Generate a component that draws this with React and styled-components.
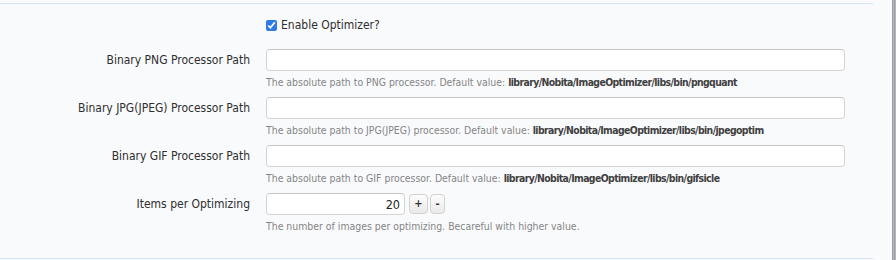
import React, { useState } from "react";
import styled, { createGlobalStyle } from "styled-components";

const GlobalStyle = createGlobalStyle`
  html, body {
    margin: 0;
    padding: 0;
    background: #f9fafc;
  }
  body {
    font-family: "DejaVu Sans Condensed", "DejaVu Sans", sans-serif;
    color: #333;
  }
`;

const Page = styled.div`
  display: flex;
  width: 896px;
  height: 260px;
  overflow: hidden;
`;

const Panel = styled.div`
  width: 873px;
  margin-top: 3px;
  height: 256px;
  border-top: 1px solid #d3e5f6;
  border-bottom: 1px solid #d3e5f6;
  box-sizing: border-box;
  padding-top: 13px;
`;

const Gutter = styled.div`
  flex: 1;
`;

const Scroll = styled.div`
  width: 4px;
  background: repeating-linear-gradient(90deg, #9a9ea3 0 1px, #b4b8bc 1px 2px);
`;

const Form = styled.div`
  display: grid;
  grid-template-columns: 250px 579px;
  column-gap: 16px;
  row-gap: 8px;
`;

const Label = styled.label`
  text-align: right;
  font-size: 12px;
  line-height: 22px;
  color: #2e2e2e;
`;

const Control = styled.div`
  display: flex;
  flex-direction: column;
`;

const CheckRow = styled.label`
  display: flex;
  align-items: center;
  gap: 4px;
  height: 16px;
  font-size: 12px;
  color: #2e2e2e;
  margin-bottom: 8px;
`;

const Check = styled.input`
  width: 11px;
  height: 11px;
  margin: 0;
  accent-color: #2f7be6;
`;

const TextBox = styled.input`
  box-sizing: border-box;
  width: ${p => p.$w || "579px"};
  height: 22px;
  border: 1px solid #d4d4d4;
  border-top-color: #c4c4c4;
  border-radius: 4px;
  background: #fff;
  padding: 0 4px;
  font: inherit;
  font-size: 12.5px;
  color: #222;
  text-align: ${p => p.$align || "left"};
  outline: none;
`;

const Help = styled.div`
  margin-top: 4px;
  font-size: 10.4px;
  line-height: 14px;
  color: #858585;

  b {
    color: #404040;
    font-weight: bold;
    letter-spacing: -0.6px;
  }
`;

const Stepper = styled.div`
  display: flex;
  align-items: center;
  gap: 2px;
`;

const StepButton = styled.button`
  box-sizing: border-box;
  width: ${p => (p.$narrow ? "15px" : "19px")};
  height: 20px;
  margin-left: ${p => (p.$narrow ? "0" : "2px")};
  padding: 0;
  border: 1px solid #d2d2d2;
  border-radius: 4px;
  background: linear-gradient(#fdfdfd, #e9e9e9);
  font: inherit;
  font-size: 11px;
  font-weight: bold;
  color: #333;
  line-height: 18px;
`;

const Empty = styled.div``;

const paths = [
  { label: "Binary PNG Processor Path", type: "PNG", bin: "pngquant" },
  { label: "Binary JPG(JPEG) Processor Path", type: "JPG(JPEG)", bin: "jpegoptim" },
  { label: "Binary GIF Processor Path", type: "GIF", bin: "gifsicle" },
];

export default function App() {
  const [enabled, setEnabled] = useState(true);
  const [items, setItems] = useState(20);

  return (
    <>
      <GlobalStyle />
      <Page>
        <Panel>
          <Form>
            <Empty />
            <CheckRow>
              <Check type="checkbox" checked={enabled} onChange={() => setEnabled(!enabled)} />
              Enable Optimizer?
            </CheckRow>

            {paths.map(p => (
              <React.Fragment key={p.type}>
                <Label>{p.label}</Label>
                <Control>
                  <TextBox type="text" />
                  <Help>
                    The absolute path to {p.type} processor. Default value:{" "}
                    <b>library/Nobita/ImageOptimizer/libs/bin/{p.bin}</b>
                  </Help>
                </Control>
              </React.Fragment>
            ))}

            <Label>Items per Optimizing</Label>
            <Control>
              <Stepper>
                <TextBox type="text" $w="139px" $align="right" value={items} readOnly />
                <StepButton onClick={() => setItems(items + 1)}>+</StepButton>
                <StepButton $narrow onClick={() => setItems(items - 1)}>-</StepButton>
              </Stepper>
              <Help>The number of images per optimizing. Becareful with higher value.</Help>
            </Control>
          </Form>
        </Panel>
        <Gutter />
        <Scroll />
      </Page>
    </>
  );
}
